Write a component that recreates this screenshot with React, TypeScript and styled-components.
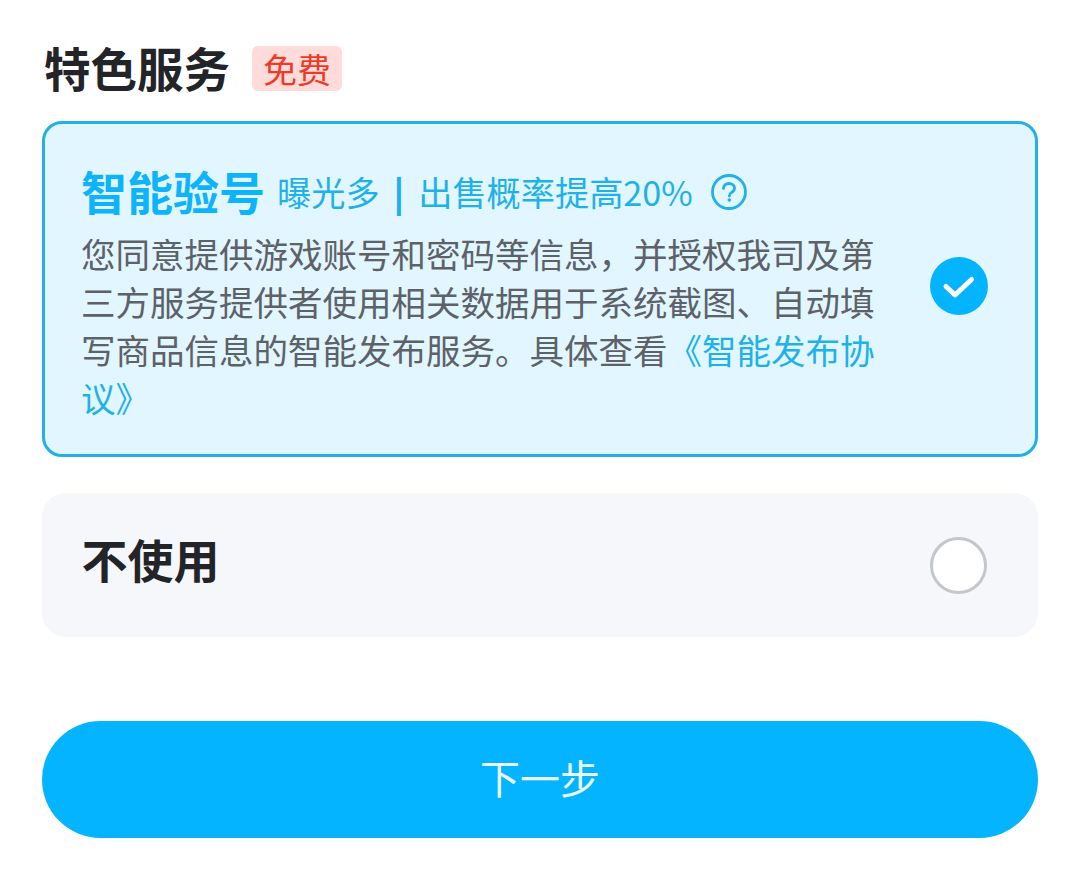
import React from "react";
import styled, { createGlobalStyle } from "styled-components";

const Global = createGlobalStyle`
  html, body { margin: 0; padding: 0; background: #fff; }
  body { font-family: "Noto Sans CJK SC", "Noto Sans", sans-serif; }
`;

const Page = styled.div`
  width: 1080px;
  height: 880px;
  box-sizing: border-box;
  padding: 40px 42px 0;
  overflow: hidden;
  display: flex;
  flex-direction: column;
`;

const Header = styled.div`
  display: flex;
  align-items: center;
  height: 56px;
  padding-left: 2px;
  gap: 22px;
`;

const Heading = styled.h2`
  margin: 0;
  font-size: 46.500px;
  line-height: 56px;
  font-weight: 700;
  color: #222427;
  position: relative;
  top: -1px;
`;

const Badge = styled.span`
  display: block;
  width: 90px;
  height: 45px;
  border-radius: 6px;
  background: #ffdcd9;
  color: #ee3a2a;
  font-size: 34px;
  line-height: 45px;
  text-align: center;
`;

const Selected = styled.div`
  box-sizing: border-box;
  margin-top: 25px;
  height: 336px;
  border: 3px solid #22b0e6;
  border-radius: 20px;
  background: #e2f6ff;
  padding: 37px 47px 0 36px;
  display: flex;
  align-items: flex-start;
  justify-content: space-between;
`;

const Copy = styled.div`
  width: 798px;
`;

const TitleRow = styled.div`
  display: flex;
  align-items: center;
  height: 58px;
  color: #0fb2f6;
`;

const Title = styled.span`
  font-size: 46px;
  line-height: 58px;
  font-weight: 700;
  color: #0db4fc;
`;

const Perk = styled.span`
  margin-left: 12px;
  font-size: 34.200px;
  line-height: 58px;
  color: #1fb1ea;
  white-space: pre;
  position: relative;
  top: 1px;
`;

const Sep = styled.b`
  font-weight: 900;
  margin: 0 14px;
`;

const Help = styled.svg`
  width: 38px;
  height: 38px;
  margin-left: 17px;
  flex: none;
  position: relative;
  top: 2px;
`;

const Body = styled.p`
  margin: 9.500px 0 0;
  font-size: 34.500px;
  line-height: 48px;
  color: #5d6168;
`;

const Link = styled.span`
  color: #1fb1ea;
`;

const Checked = styled.svg`
  width: 58px;
  height: 58px;
  margin-top: 96px;
  flex: none;
`;

const Plain = styled.div`
  box-sizing: border-box;
  margin-top: 36px;
  height: 144px;
  border-radius: 24px;
  background: #f5f7fb;
  padding: 0 51px 0 39.500px;
  display: flex;
  align-items: center;
  justify-content: space-between;
`;

const PlainLabel = styled.span`
  font-size: 46px;
  line-height: 60px;
  font-weight: 700;
  color: #222427;
  position: relative;
  top: -7px;
`;

const Radio = styled.span`
  box-sizing: border-box;
  width: 57px;
  height: 57px;
  border-radius: 50%;
  border: 3.500px solid #c3c6cc;
  background: #fff;
`;

const Next = styled.button`
  margin-top: 84px;
  height: 117px;
  border: 0;
  border-radius: 58.500px;
  background: #05b4ff;
  color: #e9f8ff;
  font-family: inherit;
  font-size: 40px;
  line-height: 60px;
  padding: 0 0 6px;
`;

export default function App() {
  return (
    <Page>
      <Global />
      <Header>
        <Heading>特色服务</Heading>
        <Badge>免费</Badge>
      </Header>
      <Selected>
        <Copy>
          <TitleRow>
            <Title>智能验号</Title>
            <Perk>曝光多<Sep>|</Sep>出售概率提高20%</Perk>
            <Help viewBox="0 0 38 38" fill="none">
              <circle cx="19" cy="19" r="16.500" stroke="#1fb1ea" strokeWidth="2.800" />
              <path d="M13.500 15.500c0-3 2.400-5 5.500-5s5.500 2 5.500 4.800c0 2-1 3-2.800 4.100-1.700 1-2.400 1.800-2.400 3.600" stroke="#1fb1ea" strokeWidth="2.800" strokeLinecap="round" />
              <circle cx="19.300" cy="27" r="1.800" fill="#1fb1ea" />
            </Help>
          </TitleRow>
          <Body>
            您同意提供游戏账号和密码等信息，并授权我司及第三方服务提供者使用相关数据用于系统截图、自动填写商品信息的智能发布服务。具体查看<Link>《智能发布协议》</Link>
          </Body>
        </Copy>
        <Checked viewBox="0 0 58 58">
          <circle cx="29" cy="29" r="29" fill="#05b4ff" />
          <path d="M16 29.500l9 8.500 16.500-15.500" fill="none" stroke="#fff" strokeWidth="5" strokeLinecap="round" strokeLinejoin="round" />
        </Checked>
      </Selected>
      <Plain>
        <PlainLabel>不使用</PlainLabel>
        <Radio />
      </Plain>
      <Next>下一步</Next>
    </Page>
  );
}
